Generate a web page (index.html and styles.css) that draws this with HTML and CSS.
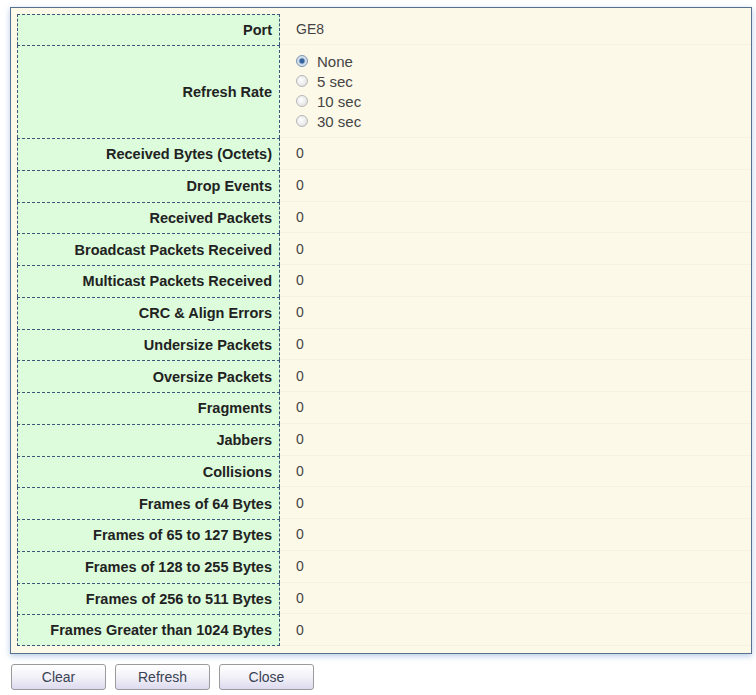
FILE: index.html
```html
<!DOCTYPE html>
<html>
<head>
<meta charset="utf-8">
<link rel="stylesheet" href="styles.css">
</head>
<body>
<div class="frame">
  <div class="table">
    <div class="row r-port"><div class="lbl">Port</div><div class="val">GE8</div></div>
    <div class="row r-rate"><div class="lbl">Refresh Rate</div>
      <div class="val radios">
        <label class="radio"><span class="dot on"></span>None</label>
        <label class="radio"><span class="dot"></span>5 sec</label>
        <label class="radio"><span class="dot"></span>10 sec</label>
        <label class="radio"><span class="dot"></span>30 sec</label>
      </div>
    </div>
    <div class="row"><div class="lbl">Received Bytes (Octets)</div><div class="val">0</div></div>
    <div class="row"><div class="lbl">Drop Events</div><div class="val">0</div></div>
    <div class="row"><div class="lbl">Received Packets</div><div class="val">0</div></div>
    <div class="row"><div class="lbl">Broadcast Packets Received</div><div class="val">0</div></div>
    <div class="row"><div class="lbl">Multicast Packets Received</div><div class="val">0</div></div>
    <div class="row"><div class="lbl">CRC &amp; Align Errors</div><div class="val">0</div></div>
    <div class="row"><div class="lbl">Undersize Packets</div><div class="val">0</div></div>
    <div class="row"><div class="lbl">Oversize Packets</div><div class="val">0</div></div>
    <div class="row"><div class="lbl">Fragments</div><div class="val">0</div></div>
    <div class="row"><div class="lbl">Jabbers</div><div class="val">0</div></div>
    <div class="row"><div class="lbl">Collisions</div><div class="val">0</div></div>
    <div class="row"><div class="lbl">Frames of 64 Bytes</div><div class="val">0</div></div>
    <div class="row"><div class="lbl">Frames of 65 to 127 Bytes</div><div class="val">0</div></div>
    <div class="row"><div class="lbl">Frames of 128 to 255 Bytes</div><div class="val">0</div></div>
    <div class="row"><div class="lbl">Frames of 256 to 511 Bytes</div><div class="val">0</div></div>
    <div class="row last"><div class="lbl">Frames Greater than 1024 Bytes</div><div class="val">0</div></div>
  </div>
</div>
<div class="buttons">
  <button class="btn">Clear</button>
  <button class="btn">Refresh</button>
  <button class="btn">Close</button>
</div>
</body>
</html>
```
FILE: styles.css
```css
html, body {
  margin: 0;
  padding: 0;
  background: #ffffff;
}
body {
  font-family: "Liberation Sans", Arial, sans-serif;
  color: #333;
  padding: 7px 4px 0 10px;
}
.frame {
  box-sizing: border-box;
  width: 742px;
  background: #fdf9e9;
  border: 1px solid #55718f;
  box-shadow: 0 2px 6px rgba(120, 160, 210, 0.55);
  padding: 6px 0 7px 6px;
}
.table {
  display: flex;
  flex-direction: column;
}
.row {
  display: flex;
  height: 31.75px;
  box-sizing: border-box;
}
.r-port { height: 31px; }
.r-rate { height: 93px; }
.lbl {
  width: 263px;
  flex: none;
  box-sizing: border-box;
  background: #dcfcdc;
  border-top: 1px dashed #3c5878;
  border-left: 1px dashed #3c5878;
  border-right: 1px dashed #3c5878;
  display: flex;
  align-items: center;
  justify-content: flex-end;
  padding-right: 7px;
  font-weight: bold;
  font-size: 14.5px;
  color: #222;
}
.row.last .lbl { border-bottom: 1px dashed #3c5878; }
.val {
  flex: 1;
  display: flex;
  align-items: center;
  padding-left: 16px;
  font-size: 14px;
  color: #444;
  border-bottom: 1px solid #f6f1e0;
}
.radios {
  flex-direction: column;
  align-items: flex-start;
  justify-content: center;
}
.radio {
  display: flex;
  align-items: center;
  height: 20px;
  font-size: 15px;
  color: #444;
}
.dot {
  width: 12px;
  height: 12px;
  border-radius: 50%;
  border: 1px solid #b8b8b8;
  background: radial-gradient(circle at 40% 40%, #ffffff 0%, #dadada 100%);
  margin-right: 9px;
  box-sizing: border-box;
  display: inline-block;
}
.dot.on {
  border-color: #7b94b0;
  background: radial-gradient(circle, #2f5f95 0%, #3d6aa0 30%, #c9d7e8 45%, #eef3f8 100%);
}
.buttons {
  display: flex;
  gap: 9px;
  margin-top: 10px;
  padding-left: 1px;
}
.btn {
  width: 95px;
  height: 26px;
  border: 1px solid #9a9a9a;
  border-radius: 3px;
  background: linear-gradient(#ffffff, #f2f1f8 50%, #dcdaee);
  font-family: "Liberation Sans", Arial, sans-serif;
  font-size: 14px;
  color: #3a4254;
  padding: 0;
}
```
